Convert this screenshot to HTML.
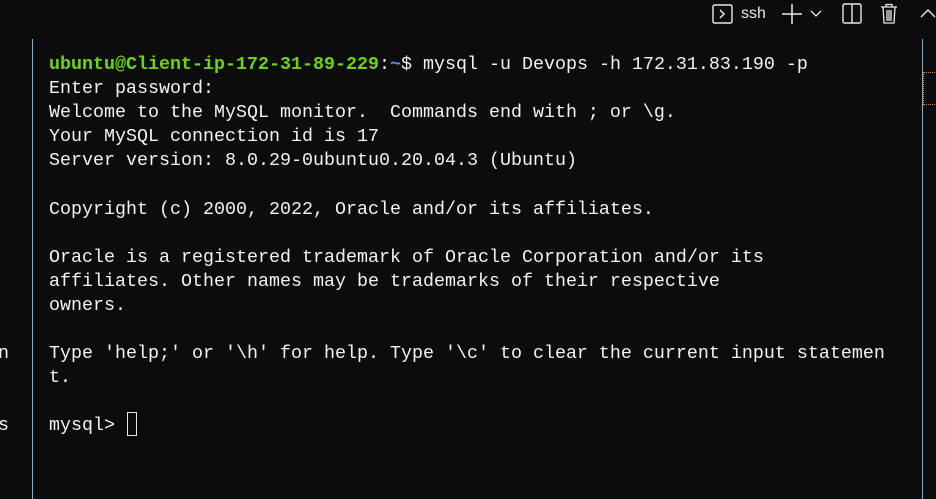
<!DOCTYPE html>
<html><head><meta charset="utf-8"><style>
html,body{margin:0;padding:0;background:#0c0c0c;width:936px;height:499px;overflow:hidden;position:relative}
.t{position:absolute;left:49px;top:53px;font-family:"Liberation Mono",monospace;font-size:18.33px;line-height:24.1px;color:#f2f2f2;white-space:pre}
.g{color:#6bd60f;font-weight:bold}
.b{color:#5b8fe8;font-weight:bold}
.l{position:absolute;width:1px;background:#6fb6e0}
.side{position:absolute;left:0;font-family:"Liberation Mono",monospace;font-size:18.33px;color:#f0f0f0}
.ic{position:absolute;color:#e8e8e8;font-family:"Liberation Sans",sans-serif}
</style></head><body>
<div class="l" style="left:32px;top:39px;height:460px"></div>
<div class="l" style="left:922px;top:39px;height:460px"></div>
<div style="position:absolute;left:923px;top:72px;width:13px;height:31px;border-top:1px dotted #f08a1c;border-bottom:1px dotted #f08a1c;border-left:1px dotted #f08a1c"></div>
<div class="side" style="top:343px;left:-2px">n</div>
<div class="side" style="top:415px;left:-2px">s</div>
<svg class="ic" style="left:712px;top:4px" width="22" height="20" viewBox="0 0 22 20"><rect x="1" y="1" width="19" height="18" rx="1.5" fill="none" stroke="#e8e8e8" stroke-width="1.4"/><path d="M8 6l4 4-4 4" fill="none" stroke="#e8e8e8" stroke-width="1.5"/></svg>
<div class="ic" style="left:741px;top:5px;font-size:16px">ssh</div>
<svg class="ic" style="left:781px;top:3px" width="22" height="22"><path d="M11 1v20M1 11h20" stroke="#e8e8e8" stroke-width="1.5"/></svg>
<svg class="ic" style="left:810px;top:10px" width="12" height="8"><path d="M1 1l5 5 5-5" fill="none" stroke="#e8e8e8" stroke-width="1.3"/></svg>
<svg class="ic" style="left:842px;top:3px" width="20" height="21"><rect x="1" y="1" width="18" height="19" rx="1.5" fill="none" stroke="#e8e8e8" stroke-width="1.4"/><path d="M10 1v19" stroke="#e8e8e8" stroke-width="1.4"/></svg>
<svg class="ic" style="left:880px;top:3px" width="18" height="21"><path d="M1 4h16M6 4V1.5h6V4M3 4l1 16h10l1-16M7 7v11M9 7v11M11 7v11" fill="none" stroke="#e8e8e8" stroke-width="1.3"/></svg>
<svg class="ic" style="left:920px;top:8px" width="16" height="10"><path d="M1 9l7-7 7 7" fill="none" stroke="#e8e8e8" stroke-width="1.4"/></svg>
<div class="t"><span class="g">ubuntu@Client-ip-172-31-89-229</span>:<span class="b">~</span>$ mysql -u Devops -h 172.31.83.190 -p
Enter password:
Welcome to the MySQL monitor.  Commands end with ; or \g.
Your MySQL connection id is 17
Server version: 8.0.29-0ubuntu0.20.04.3 (Ubuntu)

Copyright (c) 2000, 2022, Oracle and/or its affiliates.

Oracle is a registered trademark of Oracle Corporation and/or its
affiliates. Other names may be trademarks of their respective
owners.

Type 'help;' or '\h' for help. Type '\c' to clear the current input statemen
t.

mysql> </div>
<div style="position:absolute;left:127px;top:412px;width:8px;height:22px;border:1px solid #e8e8e8"></div>
</body></html>
